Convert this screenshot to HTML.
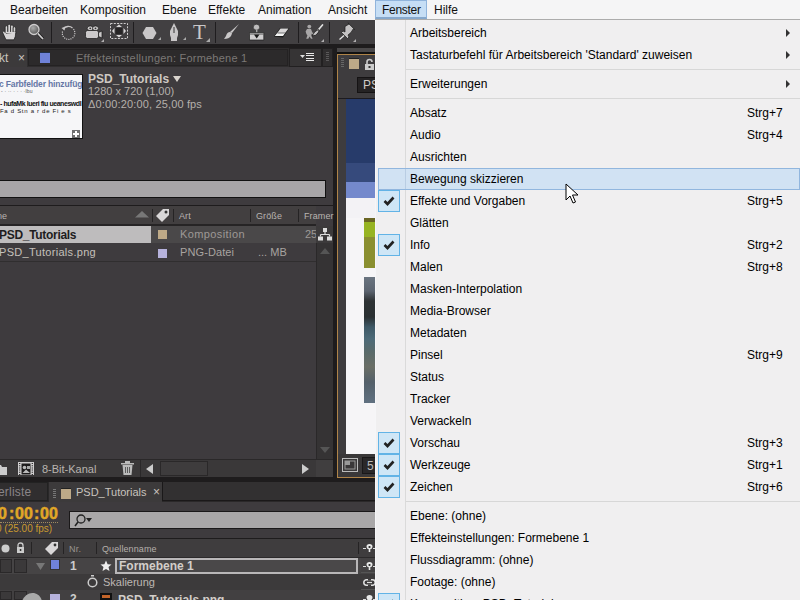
<!DOCTYPE html><html><head><meta charset='utf-8'><style>
*{margin:0;padding:0;box-sizing:border-box}
html,body{width:800px;height:600px;overflow:hidden;background:#1e1c1d;font-family:"Liberation Sans",sans-serif}
.a{position:absolute}
.t{position:absolute;white-space:nowrap;line-height:1}
svg{position:absolute;overflow:visible}
</style></head><body>
<div class="a" style="left:0px;top:20px;width:376px;height:24px;background:#424042;"></div>
<div class="a" style="left:0px;top:44px;width:376px;height:4px;background:#1e1c1d;"></div>
<svg style="left:0px;top:20px" width="20" height="22" viewBox="0 0 20 22"><g stroke="#1a1a1a" stroke-width=".7" fill="#d8d6d7"><rect x="5.2" y="5.8" width="2.6" height="9" rx="1.3"/><rect x="7.9" y="4.2" width="2.6" height="9" rx="1.3"/><rect x="10.6" y="5" width="2.6" height="9" rx="1.3"/><rect x="13.2" y="6.8" width="2.5" height="8" rx="1.25"/><path d="M2.3 11.8 Q3.2 10.6 4.5 11.8 L6 13.3 L15.7 12 Q15.8 17 14 19.8 L6 19.8 Z"/></g><path d="M5.6 12.5 H15.3" stroke="#d8d6d7" stroke-width="1.2"/></svg>
<svg style="left:25px;top:20px" width="20" height="22" viewBox="0 0 20 22"><defs><radialGradient id="lg" cx=".4" cy=".35" r=".7"><stop offset="0" stop-color="#aaa"/><stop offset="1" stop-color="#555"/></radialGradient></defs><circle cx="9" cy="9.5" r="5" fill="url(#lg)" stroke="#cfcdce" stroke-width="1.3"/><path d="M12.8 13.3 L18 19" stroke="#111" stroke-width="3"/><path d="M12.8 13.3 L18 19" stroke="#cfcdce" stroke-width="1.8"/></svg>
<div class="a" style="left:51px;top:22px;width:1px;height:21px;background:#1f1d1f;"></div>
<svg style="left:55px;top:20px" width="30" height="25" viewBox="0 0 30 25"><path d="M8.3 9 A6.3 6.3 0 0 1 17.5 8" stroke="#c8c6c7" stroke-width="1.3" fill="none"/><path d="M6.5 8 L10.5 6.5 L9.5 10.5Z" fill="#c8c6c7"/><path d="M18.8 9.5 A6.3 6.3 0 1 1 7.5 11.5" stroke="#d0cecf" stroke-width="1.3" fill="none" stroke-dasharray="0.01 2.2" stroke-linecap="round"/></svg>
<svg style="left:83px;top:20px" width="22" height="24" viewBox="0 0 22 24"><g stroke="#151515" stroke-width=".7" fill="#cbc9ca"><ellipse cx="7.2" cy="8.3" rx="3" ry="2.4"/><ellipse cx="12.5" cy="8.3" rx="3" ry="2.4"/><rect x="2.5" y="10.5" width="13" height="8" rx="2"/><path d="M15.5 12.5 L19 11 L19 18 L15.5 16.5Z"/></g><circle cx="7.2" cy="8.3" r=".9" fill="#333"/><circle cx="12.5" cy="8.3" r=".9" fill="#333"/><path d="M18 22 L21 19 L21 22Z" fill="#b0aeaf"/></svg>
<svg style="left:109px;top:22px" width="20" height="18" viewBox="0 0 20 18"><path d="M1.5 1.5 H18.5 V16.5 H1.5Z" fill="none" stroke="#d0cecf" stroke-width="1" stroke-dasharray="2 1.3"/><rect x="6.5" y="6" width="7" height="6" fill="#262425"/><path d="M7 5 L10 2.5 L13 5Z M7 13 L10 15.5 L13 13Z M5.5 6 L3 9 L5.5 12Z M14.5 6 L17 9 L14.5 12Z" fill="#d8d6d7"/></svg>
<div class="a" style="left:133px;top:22px;width:1px;height:21px;background:#1f1d1f;"></div>
<svg style="left:141px;top:23px" width="20" height="20" viewBox="0 0 20 20"><path d="M5 4 L12 4 L15.5 10 L12 16 L5 16 L1.5 10Z" fill="#c9c7c8"/><path d="M17 17 L20 14 L20 17Z" fill="#aaa"/></svg>
<svg style="left:166px;top:22px" width="20" height="22" viewBox="0 0 20 22"><path d="M8 1 L12 9 L12 13 L11 16 L5 16 L4 13 L4 9Z" fill="#c9c7c8"/><path d="M8 5 L8 11" stroke="#333" stroke-width="1"/><rect x="5" y="16" width="6" height="3" fill="#c9c7c8"/><path d="M17 18 L20 15 L20 18Z" fill="#aaa"/></svg>
<span class="t" style="left:193px;top:22px;font-size:21px;color:#c9c7c8;font-family:'Liberation Serif',serif;">T</span>
<svg style="left:206px;top:38px" width="4" height="4" viewBox="0 0 4 4"><path d="M0 4 L4 0 L4 4Z" fill="#aaa"/></svg>
<div class="a" style="left:215px;top:22px;width:1px;height:21px;background:#1f1d1f;"></div>
<svg style="left:223px;top:23px" width="18" height="18" viewBox="0 0 18 18"><path d="M16 1 L9 10 L7 9 Z" fill="#c9c7c8"/><path d="M7 9 Q4 9 3 13 L1 16 Q6 16 8 13 Q9 11 9 10Z" fill="#c9c7c8"/></svg>
<svg style="left:245px;top:20px" width="20" height="22" viewBox="0 0 20 22"><ellipse cx="11.5" cy="7.2" rx="3.2" ry="3" fill="#bdbbbc" stroke="#222" stroke-width=".6"/><rect x="11" y="10" width="1.4" height="3" fill="#aaa"/><path d="M4.5 12.5 H18.8 V20 H4.5Z" fill="#d0cecf" stroke="#1e1e1e" stroke-width=".7"/><path d="M4.5 14 H18.8" stroke="#555" stroke-width="1"/><path d="M9 14.5 L14.5 14.5 L11.7 18.5Z" fill="#1a1a1a"/></svg>
<svg style="left:272px;top:26px" width="20" height="14" viewBox="0 0 20 14"><path d="M2 10.5 L8 2 L17.5 2 L11 11.5Z" fill="#1c1c1c"/><path d="M3 10 L8.5 2.6 L16.5 2.6 L10.8 10Z" fill="#d8d6d7"/><path d="M3 10 L5.5 7 L13 7 L10.8 10Z" fill="#f4f4f4"/><path d="M5.5 7 L13 7" stroke="#555" stroke-width=".8"/></svg>
<div class="a" style="left:298px;top:22px;width:1px;height:21px;background:#1f1d1f;"></div>
<svg style="left:300px;top:20px" width="28" height="24" viewBox="0 0 28 24"><circle cx="9.3" cy="6.6" r="1.9" fill="#a8a6a7"/><path d="M7 9 L11 9 L12.3 12.5 L14.5 13.3 L14 14.3 L11.6 13.8 L11.4 16 L12.6 18.8 L11 18.8 L9.5 16.5 L8.3 18.8 L6.2 18.8 L7.4 15.6 L6.4 14 L5.6 11.6Z" fill="#a8a6a7"/><path d="M22.5 5 L18.2 10" stroke="#e0e0e0" stroke-width="1.7" stroke-linecap="round"/><path d="M18.5 9.5 Q14.5 10.5 12 16 Q16 16 18 13 Q19.5 11 18.5 9.5Z" fill="#c8c6c7" stroke="#151515" stroke-width=".8"/><path d="M21 22 L24 19 L24 22Z" fill="#b0aeaf"/></svg>
<div class="a" style="left:329px;top:22px;width:1px;height:21px;background:#1f1d1f;"></div>
<svg style="left:336px;top:20px" width="24" height="24" viewBox="0 0 24 24"><path d="M9 6.5 L13 4 L17.5 8.5 L15 12.5 L12 15 L13 17 L11.5 18.5 L5.5 12.5 L7 11 L9 12Z" fill="#c4c2c3" stroke="#1a1a1a" stroke-width=".7"/><path d="M13 4 L12 2.8 L18.8 9.5 L17.5 8.5" fill="#ddd" stroke="#1a1a1a" stroke-width=".6"/><path d="M8 15.5 L3.5 19.5" stroke="#e8e8e8" stroke-width="1.3"/><path d="M17 22 L20 19 L20 22Z" fill="#b0aeaf"/></svg>
<div class="a" style="left:0px;top:48px;width:333px;height:429px;background:#3e3b3e;"></div>
<div class="a" style="left:0px;top:48px;width:333px;height:19px;background:#2f2d2e;"></div>
<div class="a" style="left:0px;top:48px;width:27px;height:19px;background:#3c3a3b;"></div>
<span class="t" style="left:-1px;top:52px;font-size:12px;color:#c8c3be;">kt</span>
<span class="t" style="left:18px;top:52px;font-size:12px;color:#c8c3be;">×</span>
<div class="a" style="left:28px;top:49px;width:260px;height:17px;background:#2c2a2b;border:1px solid #242223"></div>
<div class="a" style="left:40px;top:52px;width:10px;height:11px;background:#6f82d8;border-top:1px solid #20304a"></div>
<span class="t" style="left:76px;top:53px;font-size:11px;color:#7b7876;letter-spacing:0.22px">Effekteinstellungen: Formebene 1</span>
<div class="a" style="left:289px;top:48px;width:33px;height:19px;background:#363435;border:1px solid #222021"></div>
<svg style="left:300px;top:52px" width="15" height="10" viewBox="0 0 15 10"><path d="M0 3 L5 3 L2.5 6Z" fill="#ddd"/><rect x="6" y="1" width="8" height="1" fill="#e8e8e8"/><rect x="6" y="3" width="8" height="1" fill="#e8e8e8"/><rect x="6" y="6" width="8" height="1" fill="#e8e8e8"/><rect x="6" y="8" width="8" height="1" fill="#e8e8e8"/></svg>
<div class="a" style="left:322px;top:48px;width:11px;height:19px;background:#302e2f;border:1px solid #222021"></div>
<div class="a" style="left:326px;top:52px;width:3px;height:1px;background:#5a5859;"></div>
<div class="a" style="left:326px;top:54px;width:3px;height:1px;background:#5a5859;"></div>
<div class="a" style="left:326px;top:56px;width:3px;height:1px;background:#5a5859;"></div>
<div class="a" style="left:326px;top:58px;width:3px;height:1px;background:#5a5859;"></div>
<div class="a" style="left:326px;top:60px;width:3px;height:1px;background:#5a5859;"></div>
<div class="a" style="left:-1px;top:74px;width:84px;height:65px;background:#f6f6f8;border:1px solid #111;overflow:hidden">
<span class="t" style="left:-1px;top:5px;font-size:8.5px;color:#3e5590;letter-spacing:-0.15px;font-weight:bold;opacity:.8">c Farbfelder hinzufüge</span>
<span class="t" style="left:1px;top:14px;font-size:5px;color:#555;letter-spacing:0.2px">- · ··  ·  · ·  ·lbu</span>
<span class="t" style="left:0px;top:25px;font-size:7px;color:#111;font-weight:bold;letter-spacing:-0.45px">- hufaMk lueri fiu ueaneswdl</span>
<span class="t" style="left:0px;top:33px;font-size:6px;color:#222;letter-spacing:0.7px">Fa d Stn   a  r  de  Fi  e  s</span>
<div class="a" style="left:72px;top:55px;width:8px;height:8px;background:#707070"></div>
<div class="a" style="left:73px;top:58px;width:6px;height:2px;background:#fff"></div>
<div class="a" style="left:75px;top:56px;width:2px;height:6px;background:#fff"></div>
</div>
<span class="t" style="left:88px;top:73px;font-size:12px;color:#cfc9c3;font-weight:bold">PSD_Tutorials</span>
<svg style="left:173px;top:76px" width="8" height="7" viewBox="0 0 8 7"><path d="M0 0 L8 0 L4 6Z" fill="#d8d3cd"/></svg>
<span class="t" style="left:88px;top:86px;font-size:11px;color:#b5b0ab;">1280 x 720 (1,00)</span>
<span class="t" style="left:88px;top:99px;font-size:11px;color:#b5b0ab;letter-spacing:0.15px">Δ0:00:20:00, 25,00 fps</span>
<div class="a" style="left:-1px;top:180px;width:327px;height:18px;background:#a7a5a7;border:1px solid #111"></div>
<div class="a" style="left:0px;top:205px;width:333px;height:1px;background:#1e1c1d;"></div>
<div class="a" style="left:0px;top:206px;width:316px;height:18px;background:#423f40;"></div>
<div class="a" style="left:0px;top:224px;width:316px;height:2px;background:#262425;"></div>
<span class="t" style="left:-3px;top:212px;font-size:9px;color:#b9b4b0;letter-spacing:0.1px">ne</span>
<svg style="left:135px;top:211px" width="15" height="7" viewBox="0 0 15 7"><path d="M0 6.5 L7 0 L14 6.5Z" fill="#777"/></svg>
<div class="a" style="left:152px;top:209px;width:1px;height:13px;background:#252324;"></div>
<svg style="left:154px;top:208px" width="18" height="16" viewBox="0 0 18 16"><path d="M2 8 L9 1 L15 1 L15 7 L8 14Z" fill="#d9d7d8"/><circle cx="12" cy="4" r="1.5" fill="#333"/></svg>
<div class="a" style="left:173px;top:209px;width:1px;height:13px;background:#252324;"></div>
<span class="t" style="left:179px;top:212px;font-size:9px;color:#b9b4b0;letter-spacing:0.1px">Art</span>
<div class="a" style="left:250px;top:209px;width:1px;height:13px;background:#252324;"></div>
<span class="t" style="left:256px;top:212px;font-size:9px;color:#b9b4b0;letter-spacing:0.1px">Größe</span>
<div class="a" style="left:298px;top:209px;width:1px;height:13px;background:#252324;"></div>
<span class="t" style="left:304px;top:212px;font-size:9px;color:#b9b4b0;letter-spacing:0.1px">Framer</span>
<div class="a" style="left:0px;top:226px;width:151px;height:17px;background:#bebcbd;"></div>
<div class="a" style="left:151px;top:226px;width:165px;height:17px;background:#4a4849;"></div>
<span class="t" style="left:-1px;top:229px;font-size:12px;color:#1f1d1e;font-weight:bold;letter-spacing:-0.3px">PSD_Tutorials</span>
<div class="a" style="left:158px;top:230px;width:9px;height:9px;background:#bea987;"></div>
<span class="t" style="left:180px;top:229px;font-size:11px;color:#9e9996;letter-spacing:0.4px">Komposition</span>
<span class="t" style="left:305px;top:229px;font-size:11px;color:#9e9996;">25</span>
<div class="a" style="left:0px;top:243px;width:316px;height:18px;background:#3e3b3e;"></div>
<div class="a" style="left:0px;top:261px;width:316px;height:1px;background:#302e2f;"></div>
<span class="t" style="left:-1px;top:247px;font-size:11px;color:#c5c0bb;letter-spacing:0.3px">PSD_Tutorials.png</span>
<div class="a" style="left:158px;top:249px;width:9px;height:9px;background:#b6b2dc;"></div>
<span class="t" style="left:180px;top:247px;font-size:11px;color:#a9a4a0;letter-spacing:0.1px">PNG-Datei</span>
<span class="t" style="left:258px;top:247px;font-size:11px;color:#a9a4a0;">... MB</span>
<div class="a" style="left:316px;top:226px;width:17px;height:17px;background:#3c3a3b;"></div>
<svg style="left:318px;top:228px" width="14" height="13" viewBox="0 0 14 13"><rect x="5" y="0" width="4" height="4" fill="#ddd"/><path d="M7 4 V6.5 M2.5 6.5 H11.5 M2.5 6.5 V8.5 M11.5 6.5 V8.5" stroke="#ddd" stroke-width="1.2"/><rect x="0" y="8.5" width="5" height="4" fill="#ddd"/><rect x="9" y="8.5" width="5" height="4" fill="#ddd"/></svg>
<div class="a" style="left:316px;top:243px;width:17px;height:217px;background:#353334;border-left:1px solid #2a2829"></div>
<svg style="left:320px;top:248px" width="10" height="6" viewBox="0 0 10 6"><path d="M0 6 L5 0 L10 6Z" fill="#555"/></svg>
<svg style="left:320px;top:447px" width="10" height="6" viewBox="0 0 10 6"><path d="M0 0 L5 6 L10 0Z" fill="#555"/></svg>
<div class="a" style="left:0px;top:459px;width:333px;height:1px;background:#2a2829;"></div>
<div class="a" style="left:0px;top:460px;width:333px;height:17px;background:#3a3839;"></div>
<svg style="left:-3px;top:462px" width="10" height="13" viewBox="0 0 10 13"><path d="M0 3 H4 L5 5 H10 V13 H0Z" fill="#ccc"/></svg>
<svg style="left:18px;top:462px" width="16" height="13" viewBox="0 0 16 13"><rect x="0" y="0" width="16" height="13" fill="#d0cecf"/><rect x="3.5" y="1.5" width="9" height="11" fill="#1e1c1d"/><circle cx="6.5" cy="5.5" r="1.8" fill="#bbb"/><path d="M4.5 11 L8 7.5 L12 11Z" fill="#bbb"/><rect x="9" y="4" width="3" height="3" fill="#aaa"/><path d="M1.7 1 V13 M14.3 1 V13" stroke="#222" stroke-width="1.2" stroke-dasharray="1 1.2"/></svg>
<span class="t" style="left:42px;top:464px;font-size:11px;color:#b9b4b0;">8-Bit-Kanal</span>
<svg style="left:121px;top:461px" width="13" height="14" viewBox="0 0 13 14"><rect x="0" y="2" width="13" height="1.5" fill="#bbb"/><rect x="4" y="0" width="5" height="2" fill="#bbb"/><path d="M1.5 4 H11.5 L10.5 14 H2.5Z" fill="#bbb"/><path d="M4.5 6 V12 M6.5 6 V12 M8.5 6 V12" stroke="#444" stroke-width="0.8"/></svg>
<div class="a" style="left:140px;top:460px;width:1px;height:17px;background:#2a2829;"></div>
<svg style="left:146px;top:464px" width="7" height="10" viewBox="0 0 7 10"><path d="M7 0 L0 5 L7 10Z" fill="#ccc"/></svg>
<div class="a" style="left:160px;top:461px;width:48px;height:15px;background:#3e3c3d;border:1px solid #2a2829"></div>
<svg style="left:302px;top:464px" width="7" height="10" viewBox="0 0 7 10"><path d="M0 0 L7 5 L0 10Z" fill="#ccc"/></svg>
<div class="a" style="left:316px;top:460px;width:17px;height:17px;background:#403e3f;"></div>
<div class="a" style="left:337px;top:48px;width:39px;height:4px;background:#4a4849;"></div>
<div class="a" style="left:337px;top:52px;width:39px;height:2px;background:#111;"></div>
<div class="a" style="left:337px;top:54px;width:39px;height:424px;background:#3e3c3e;border-left:1px solid #b08448;border-top:1px solid #b08448;border-bottom:1px solid #b08448"></div>
<div class="a" style="left:341px;top:58px;width:3px;height:1px;background:#666;"></div>
<div class="a" style="left:341px;top:60px;width:3px;height:1px;background:#666;"></div>
<div class="a" style="left:341px;top:62px;width:3px;height:1px;background:#666;"></div>
<div class="a" style="left:341px;top:64px;width:3px;height:1px;background:#666;"></div>
<div class="a" style="left:341px;top:66px;width:3px;height:1px;background:#666;"></div>
<div class="a" style="left:349px;top:58px;width:10px;height:11px;background:#bda988;border-top:1px solid #222"></div>
<svg style="left:364px;top:59px" width="12" height="12" viewBox="0 0 12 12"><path d="M3 5 V3 Q3 0.5 5.5 0.5 Q8 0.5 8 3" stroke="#ccc" stroke-width="1.6" fill="none"/><rect x="1" y="5" width="9" height="6" fill="#ccc"/><rect x="4.5" y="7" width="2" height="2" fill="#333"/></svg>
<div class="a" style="left:357px;top:77px;width:19px;height:16px;background:#252324;border:1px solid #151314"></div>
<span class="t" style="left:363px;top:79px;font-size:12px;color:#cfcac5;">PS</span>
<div class="a" style="left:338px;top:98px;width:38px;height:1px;background:#1c1b20;"></div>
<div class="a" style="left:338px;top:99px;width:38px;height:355px;background:#3e3c3e;"></div>
<div class="a" style="left:346px;top:99px;width:29px;height:64px;background:#273b6a;"></div>
<div class="a" style="left:346px;top:163px;width:29px;height:19px;background:#364a7c;"></div>
<div class="a" style="left:346px;top:182px;width:29px;height:16px;background:#7489cc;"></div>
<div class="a" style="left:346px;top:198px;width:29px;height:256px;background:#f6f5f7;"></div>
<div class="a" style="left:346px;top:198px;width:29px;height:20px;background:#f3f2f5;"></div>
<div class="a" style="left:364px;top:218px;width:12px;height:50px;background:#8a8f30;"></div>
<div class="a" style="left:364px;top:218px;width:12px;height:4px;background:#6a6624;"></div>
<div class="a" style="left:364px;top:222px;width:12px;height:15px;background:#97b422;"></div>
<div class="a" style="left:364px;top:277px;width:11px;height:126px;background:#555;background:linear-gradient(#6a7480 0px,#5c6470 14px,#2e3234 24px,#2a3032 40px,#3e5866 50px,#4d6a78 62px,#5a6a6a 75px,#6a6e66 90px,#54606a 105px,#607080 126px)"></div>
<div class="a" style="left:338px;top:454px;width:38px;height:23px;background:#3a3839;"></div>
<svg style="left:342px;top:458px" width="16" height="14" viewBox="0 0 16 14"><rect x="0.5" y="0.5" width="15" height="13" fill="none" stroke="#bbb"/><rect x="3" y="3" width="10" height="8" fill="none" stroke="#999"/><rect x="3" y="3" width="5" height="4" fill="#999"/></svg>
<div class="a" style="left:362px;top:457px;width:14px;height:17px;background:#2a2829;border:1px solid #1a1819"></div>
<span class="t" style="left:367px;top:460px;font-size:12px;color:#bbb;">5</span>
<div class="a" style="left:0px;top:482px;width:376px;height:118px;background:#3e3b3e;"></div>
<div class="a" style="left:0px;top:482px;width:376px;height:20px;background:#2a2829;"></div>
<div class="a" style="left:-1px;top:482px;width:49px;height:19px;background:#302e2f;border:1px solid #222"></div>
<span class="t" style="left:-2px;top:486px;font-size:12px;color:#8a8588;letter-spacing:0.2px">erliste</span>
<div class="a" style="left:49px;top:482px;width:113px;height:20px;background:#3c3a3b;"></div>
<div class="a" style="left:53px;top:489px;width:3px;height:1px;background:#777;"></div>
<div class="a" style="left:53px;top:491px;width:3px;height:1px;background:#777;"></div>
<div class="a" style="left:53px;top:493px;width:3px;height:1px;background:#777;"></div>
<div class="a" style="left:53px;top:495px;width:3px;height:1px;background:#777;"></div>
<div class="a" style="left:53px;top:497px;width:3px;height:1px;background:#777;"></div>
<div class="a" style="left:61px;top:488px;width:10px;height:11px;background:#bda988;border-top:1px solid #222"></div>
<span class="t" style="left:76px;top:487px;font-size:11px;color:#c8c3be;">PSD_Tutorials</span>
<span class="t" style="left:153px;top:486px;font-size:12px;color:#c8c3be;">×</span>
<div class="a" style="left:162px;top:482px;width:214px;height:19px;background:#323031;border-left:1px solid #1a1819;border-bottom:1px solid #1a1819"></div>
<span class="t" style="left:-2px;top:506px;font-size:16px;color:#e0a727;font-weight:bold;-webkit-text-stroke:0.5px #e0a727">0</span>
<span class="t" style="left:9px;top:506px;font-size:16px;color:#e0a727;font-weight:bold;-webkit-text-stroke:0.5px #e0a727">:</span>
<span class="t" style="left:15px;top:506px;font-size:16px;color:#e0a727;font-weight:bold;-webkit-text-stroke:0.5px #e0a727">00</span>
<span class="t" style="left:34px;top:506px;font-size:16px;color:#e0a727;font-weight:bold;-webkit-text-stroke:0.5px #e0a727">:</span>
<span class="t" style="left:40px;top:506px;font-size:16px;color:#e0a727;font-weight:bold;-webkit-text-stroke:0.5px #e0a727">00</span>
<div class="a" style="left:0px;top:522px;width:58px;height:1px;background:transparent;border-top:1px dotted #a08a60"></div>
<span class="t" style="left:-4px;top:524px;font-size:10px;color:#c99a30;">0 (25.00 fps)</span>
<div class="a" style="left:69px;top:511px;width:308px;height:18px;background:#a9a7a8;border:1px solid #1a1819"></div>
<svg style="left:74px;top:514px" width="20" height="13" viewBox="0 0 20 13"><circle cx="7" cy="5" r="4" fill="none" stroke="#222" stroke-width="1.3"/><path d="M4 8 L1 12" stroke="#222" stroke-width="1.5"/><path d="M12 4 L18 4 L15 8Z" fill="#222"/></svg>
<div class="a" style="left:0px;top:538px;width:376px;height:1px;background:#1e1c1d;"></div>
<div class="a" style="left:0px;top:539px;width:376px;height:18px;background:#3f3d3e;"></div>
<svg style="left:1px;top:544px" width="9" height="9" viewBox="0 0 9 9"><circle cx="4.5" cy="4.5" r="4" fill="#ccc"/></svg>
<svg style="left:16px;top:542px" width="9" height="12" viewBox="0 0 9 12"><path d="M2 5 V3.5 Q2 1 4.5 1 Q7 1 7 3.5 V5" stroke="#ccc" stroke-width="1.3" fill="none"/><rect x="1" y="5" width="7" height="6" fill="#ccc"/><rect x="3.8" y="7" width="1.5" height="2" fill="#333"/></svg>
<div class="a" style="left:31px;top:542px;width:1px;height:12px;background:#252324;"></div>
<svg style="left:44px;top:541px" width="17" height="15" viewBox="0 0 17 15"><path d="M1 8 L8 1 L14 1 L14 7 L7 14Z" fill="#d9d7d8"/><circle cx="11" cy="4" r="1.4" fill="#333"/></svg>
<div class="a" style="left:63px;top:542px;width:1px;height:12px;background:#252324;"></div>
<span class="t" style="left:69px;top:545px;font-size:9px;color:#9a9591;letter-spacing:0.3px">Nr.</span>
<div class="a" style="left:96px;top:542px;width:1px;height:12px;background:#252324;"></div>
<span class="t" style="left:102px;top:545px;font-size:9px;color:#b5b0ab;letter-spacing:0.1px">Quellenname</span>
<div class="a" style="left:358px;top:542px;width:1px;height:12px;background:#252324;"></div>
<svg style="left:363px;top:544px" width="13" height="9" viewBox="0 0 13 9"><path d="M0 4.5 H3 M10 4.5 H13" stroke="#ddd" stroke-width="1.2"/><path d="M3.5 2.5 Q3.5 0 6.5 0 Q9.5 0 9.5 2.5 Q9.5 5 7.3 5.2 V8 H5.7 V5.2 Q3.5 5 3.5 2.5Z" fill="#e8e8e8"/><rect x="5.6" y="2" width="1.8" height="2" fill="#333"/></svg>
<div class="a" style="left:0px;top:557px;width:376px;height:1px;background:#2c2a2b;"></div>
<div class="a" style="left:0px;top:558px;width:376px;height:16px;background:#464445;"></div>
<div class="a" style="left:0px;top:559px;width:12px;height:14px;background:#3b393a;border:1px solid #2a2829"></div>
<div class="a" style="left:14px;top:559px;width:13px;height:14px;background:#3b393a;border:1px solid #2a2829"></div>
<svg style="left:36px;top:563px" width="9" height="7" viewBox="0 0 9 7"><path d="M0 0 L9 0 L4.5 7Z" fill="#777"/></svg>
<div class="a" style="left:50px;top:559px;width:10px;height:11px;background:#6f82d8;border:1px solid #333"></div>
<span class="t" style="left:70px;top:560px;font-size:12px;color:#ccc;font-weight:bold">1</span>
<svg style="left:100px;top:560px" width="12" height="12" viewBox="0 0 12 12"><path d="M6 0.5 L7.6 4.2 L11.5 4.5 L8.5 7.1 L9.5 11 L6 9 L2.5 11 L3.5 7.1 L0.5 4.5 L4.4 4.2Z" fill="#eee"/></svg>
<div class="a" style="left:115px;top:558px;width:243px;height:16px;background:#4a4849;border:2px solid #b9b7b8"></div>
<span class="t" style="left:119px;top:560px;font-size:12px;color:#d3cec9;font-weight:bold">Formebene 1</span>
<div class="a" style="left:361px;top:558px;width:15px;height:15px;background:#444243;border-bottom:1px solid #555"></div>
<svg style="left:363px;top:562px" width="13" height="9" viewBox="0 0 13 9"><path d="M0 4.5 H3 M10 4.5 H13" stroke="#ddd" stroke-width="1.2"/><path d="M3.5 2.5 Q3.5 0 6.5 0 Q9.5 0 9.5 2.5 Q9.5 5 7.3 5.2 V8 H5.7 V5.2 Q3.5 5 3.5 2.5Z" fill="#e8e8e8"/><rect x="5.6" y="2" width="1.8" height="2" fill="#333"/></svg>
<div class="a" style="left:0px;top:574px;width:376px;height:16px;background:#3c3a3b;"></div>
<svg style="left:87px;top:575px" width="11" height="13" viewBox="0 0 11 13"><rect x="4" y="0" width="3" height="1.5" fill="#ccc"/><circle cx="5.5" cy="7.5" r="4.3" fill="none" stroke="#ccc" stroke-width="1.5"/></svg>
<span class="t" style="left:103px;top:577px;font-size:11px;color:#bcb7b3;">Skalierung</span>
<div class="a" style="left:361px;top:574px;width:15px;height:16px;background:#3c3a3b;border-bottom:1px solid #555"></div>
<svg style="left:363px;top:579px" width="13" height="8" viewBox="0 0 13 8"><rect x="0.8" y="0.8" width="11.4" height="5.4" rx="2.7" fill="none" stroke="#e0e0e0" stroke-width="1.5"/><path d="M4 3.5 H9" stroke="#e0e0e0" stroke-width="1.2"/><rect x="5" y="0" width="3" height="1.6" fill="#3c3a3b"/><rect x="5" y="5.4" width="3" height="1.6" fill="#3c3a3b"/></svg>
<div class="a" style="left:0px;top:590px;width:376px;height:10px;background:#424041;"></div>
<div class="a" style="left:0px;top:591px;width:12px;height:9px;background:#3b393a;border:1px solid #2a2829"></div>
<div class="a" style="left:14px;top:591px;width:13px;height:9px;background:#3b393a;border:1px solid #2a2829"></div>
<svg style="left:20px;top:592px" width="24" height="10" viewBox="0 0 24 10"><path d="M2 9 Q6 0 14 1 Q20 2 22 9Z" fill="#aaa"/></svg>
<div class="a" style="left:50px;top:594px;width:10px;height:6px;background:#b6b2dc;"></div>
<span class="t" style="left:70px;top:593px;font-size:12px;color:#ccc;font-weight:bold">2</span>
<div class="a" style="left:100px;top:593px;width:12px;height:7px;background:#c2642a;border:2px solid #111"></div>
<span class="t" style="left:118px;top:594px;font-size:12px;color:#d3cec9;font-weight:bold">PSD_Tutorials.png</span>
<svg style="left:363px;top:595px" width="13" height="9" viewBox="0 0 13 9"><path d="M0 4.5 H3 M10 4.5 H13" stroke="#ddd" stroke-width="1.2"/><path d="M3.5 2.5 Q3.5 0 6.5 0 Q9.5 0 9.5 2.5 Q9.5 5 7.3 5.2 V8 H5.7 V5.2 Q3.5 5 3.5 2.5Z" fill="#e8e8e8"/></svg>
<div class="a" style="left:0px;top:0px;width:800px;height:20px;background:#f5f5f6;"></div>
<div class="a" style="left:375px;top:19px;width:425px;height:1px;background:#acacac;"></div>
<span class="t" style="left:10px;top:4px;font-size:12px;color:#111;">Bearbeiten</span>
<span class="t" style="left:80px;top:4px;font-size:12px;color:#111;">Komposition</span>
<span class="t" style="left:162px;top:4px;font-size:12px;color:#111;">Ebene</span>
<span class="t" style="left:208px;top:4px;font-size:12px;color:#111;">Effekte</span>
<span class="t" style="left:258px;top:4px;font-size:12px;color:#111;">Animation</span>
<span class="t" style="left:328px;top:4px;font-size:12px;color:#111;">Ansicht</span>
<span class="t" style="left:434px;top:4px;font-size:12px;color:#111;">Hilfe</span>
<div class="a" style="left:375px;top:0px;width:52px;height:19px;background:#c6def5;border:1px solid #90b4dc;border-bottom:2px solid #86a8cc"></div>
<span class="t" style="left:382px;top:4px;font-size:12px;color:#111;letter-spacing:-0.3px">Fenster</span>
<div class="a" style="left:375px;top:20px;width:425px;height:580px;background:#f0eff0;border-left:1px solid #f6f6f8"></div>
<div class="a" style="left:405px;top:20px;width:1px;height:580px;background:#dadada;"></div>
<span class="t" style="left:410px;top:27px;font-size:12px;color:#000;">Arbeitsbereich</span>
<div class="a" style="left:786px;top:29px;width:0;height:0;border-left:4px solid #333;border-top:4px solid transparent;border-bottom:4px solid transparent"></div>
<span class="t" style="left:410px;top:49px;font-size:12px;color:#000;">Tastaturbefehl für Arbeitsbereich 'Standard' zuweisen</span>
<div class="a" style="left:786px;top:51px;width:0;height:0;border-left:4px solid #333;border-top:4px solid transparent;border-bottom:4px solid transparent"></div>
<div class="a" style="left:406px;top:69px;width:394px;height:1px;background:#d7d7d7;"></div>
<span class="t" style="left:410px;top:78px;font-size:12px;color:#000;">Erweiterungen</span>
<div class="a" style="left:786px;top:80px;width:0;height:0;border-left:4px solid #333;border-top:4px solid transparent;border-bottom:4px solid transparent"></div>
<div class="a" style="left:406px;top:98px;width:394px;height:1px;background:#d7d7d7;"></div>
<span class="t" style="left:410px;top:107px;font-size:12px;color:#000;">Absatz</span>
<span class="t" style="left:747px;top:107px;font-size:12px;color:#000;">Strg+7</span>
<span class="t" style="left:410px;top:129px;font-size:12px;color:#000;">Audio</span>
<span class="t" style="left:747px;top:129px;font-size:12px;color:#000;">Strg+4</span>
<span class="t" style="left:410px;top:151px;font-size:12px;color:#000;">Ausrichten</span>
<div class="a" style="left:378px;top:168px;width:422px;height:22px;background:#d1e2f3;border:1px solid #91b6de"></div>
<div class="a" style="left:405px;top:169px;width:1px;height:20px;background:#b9cde3;"></div>
<span class="t" style="left:410px;top:173px;font-size:12px;color:#000;">Bewegung skizzieren</span>
<div class="a" style="left:378px;top:190px;width:22px;height:22px;background:#cfe6f6;border:1px solid #62b3e6"></div>
<svg style="left:383px;top:196px" width="12" height="10" viewBox="0 0 12 10"><path d="M1.5 5 L4.5 8 L10.5 1.5" stroke="#222" stroke-width="2.6" fill="none"/></svg>
<span class="t" style="left:410px;top:195px;font-size:12px;color:#000;">Effekte und Vorgaben</span>
<span class="t" style="left:747px;top:195px;font-size:12px;color:#000;">Strg+5</span>
<span class="t" style="left:410px;top:217px;font-size:12px;color:#000;">Glätten</span>
<div class="a" style="left:378px;top:234px;width:22px;height:22px;background:#cfe6f6;border:1px solid #62b3e6"></div>
<svg style="left:383px;top:240px" width="12" height="10" viewBox="0 0 12 10"><path d="M1.5 5 L4.5 8 L10.5 1.5" stroke="#222" stroke-width="2.6" fill="none"/></svg>
<span class="t" style="left:410px;top:239px;font-size:12px;color:#000;">Info</span>
<span class="t" style="left:747px;top:239px;font-size:12px;color:#000;">Strg+2</span>
<span class="t" style="left:410px;top:261px;font-size:12px;color:#000;">Malen</span>
<span class="t" style="left:747px;top:261px;font-size:12px;color:#000;">Strg+8</span>
<span class="t" style="left:410px;top:283px;font-size:12px;color:#000;">Masken-Interpolation</span>
<span class="t" style="left:410px;top:305px;font-size:12px;color:#000;">Media-Browser</span>
<span class="t" style="left:410px;top:327px;font-size:12px;color:#000;">Metadaten</span>
<span class="t" style="left:410px;top:349px;font-size:12px;color:#000;">Pinsel</span>
<span class="t" style="left:747px;top:349px;font-size:12px;color:#000;">Strg+9</span>
<span class="t" style="left:410px;top:371px;font-size:12px;color:#000;">Status</span>
<span class="t" style="left:410px;top:393px;font-size:12px;color:#000;">Tracker</span>
<span class="t" style="left:410px;top:415px;font-size:12px;color:#000;">Verwackeln</span>
<div class="a" style="left:378px;top:432px;width:22px;height:22px;background:#cfe6f6;border:1px solid #62b3e6"></div>
<svg style="left:383px;top:438px" width="12" height="10" viewBox="0 0 12 10"><path d="M1.5 5 L4.5 8 L10.5 1.5" stroke="#222" stroke-width="2.6" fill="none"/></svg>
<span class="t" style="left:410px;top:437px;font-size:12px;color:#000;">Vorschau</span>
<span class="t" style="left:747px;top:437px;font-size:12px;color:#000;">Strg+3</span>
<div class="a" style="left:378px;top:454px;width:22px;height:22px;background:#cfe6f6;border:1px solid #62b3e6"></div>
<svg style="left:383px;top:460px" width="12" height="10" viewBox="0 0 12 10"><path d="M1.5 5 L4.5 8 L10.5 1.5" stroke="#222" stroke-width="2.6" fill="none"/></svg>
<span class="t" style="left:410px;top:459px;font-size:12px;color:#000;">Werkzeuge</span>
<span class="t" style="left:747px;top:459px;font-size:12px;color:#000;">Strg+1</span>
<div class="a" style="left:378px;top:476px;width:22px;height:22px;background:#cfe6f6;border:1px solid #62b3e6"></div>
<svg style="left:383px;top:482px" width="12" height="10" viewBox="0 0 12 10"><path d="M1.5 5 L4.5 8 L10.5 1.5" stroke="#222" stroke-width="2.6" fill="none"/></svg>
<span class="t" style="left:410px;top:481px;font-size:12px;color:#000;">Zeichen</span>
<span class="t" style="left:747px;top:481px;font-size:12px;color:#000;">Strg+6</span>
<div class="a" style="left:406px;top:501px;width:394px;height:1px;background:#d7d7d7;"></div>
<span class="t" style="left:410px;top:510px;font-size:12px;color:#000;">Ebene: (ohne)</span>
<span class="t" style="left:410px;top:532px;font-size:12px;color:#000;">Effekteinstellungen: Formebene 1</span>
<span class="t" style="left:410px;top:554px;font-size:12px;color:#000;">Flussdiagramm: (ohne)</span>
<span class="t" style="left:410px;top:576px;font-size:12px;color:#000;">Footage: (ohne)</span>
<div class="a" style="left:378px;top:593px;width:22px;height:22px;background:#cfe6f6;border:1px solid #62b3e6"></div>
<svg style="left:383px;top:599px" width="12" height="10" viewBox="0 0 12 10"><path d="M1.5 5 L4.5 8 L10.5 1.5" stroke="#222" stroke-width="2.6" fill="none"/></svg>
<span class="t" style="left:410px;top:598px;font-size:12px;color:#000;">Komposition: PSD_Tutorials</span>
<svg style="left:565px;top:183px" width="14" height="22" viewBox="0 0 14 22"><path d="M1 1 L1 17 L5 13 L8 20 L10.5 19 L7.5 12 L13 12Z" fill="#fff" stroke="#000" stroke-width="1"/></svg>
</body></html>
